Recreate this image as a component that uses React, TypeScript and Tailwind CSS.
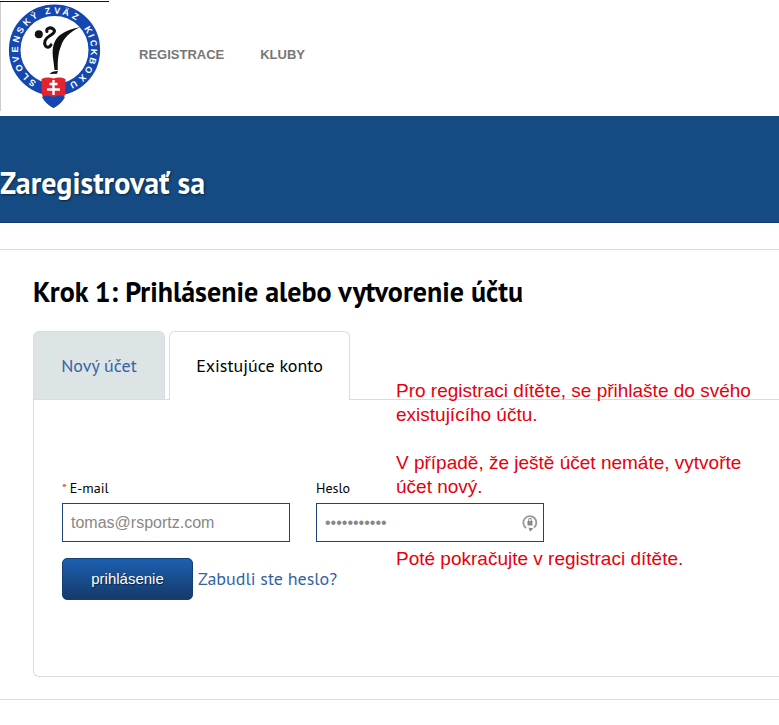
const ringLetters: { char: string; angle: number }[] = [
  { char: "S", angle: 214 },
  { char: "L", angle: 228 },
  { char: "O", angle: 243 },
  { char: "V", angle: 257 },
  { char: "E", angle: 271 },
  { char: "N", angle: 286 },
  { char: "S", angle: 300 },
  { char: "K", angle: 315 },
  { char: "Ý", angle: 329 },
  { char: "Z", angle: 350 },
  { char: "V", angle: 4 },
  { char: "Ä", angle: 17 },
  { char: "Z", angle: 32 },
  { char: "K", angle: 59 },
  { char: "I", angle: 69 },
  { char: "C", angle: 80 },
  { char: "K", angle: 93 },
  { char: "B", angle: 106 },
  { char: "O", angle: 120 },
  { char: "X", angle: 135 },
  { char: "U", angle: 151 },
];

function Logo() {
  return (
    <svg viewBox="0 0 109 111" className="block h-[111px] w-[109px]" role="img" aria-label="Slovenský zväz kickboxu">
      <path d="M0 1.5H109" stroke="#111" strokeWidth="1" />
      <path d="M0.5 2V111" stroke="#ccc" strokeWidth="1" />
      <circle cx="54.5" cy="50" r="39.8" fill="#fff" stroke="#1447b0" strokeWidth="11.6" />
      {ringLetters.map((letter, index) => (
        <text
          key={index}
          x="54.5"
          y="13.5"
          textAnchor="middle"
          transform={`rotate(${letter.angle} 54.5 50)`}
          fill="#fff"
          className="font-['Liberation_Sans',sans-serif] text-[9px] font-bold"
        >
          {letter.char}
        </text>
      ))}
      <circle cx="38.8" cy="34.2" r="4" fill="#111" />
      <path
        d="M47 31.500C45.500 28.500 50 26.800 53 28.800C56.500 31.500 53 34 49.500 36C45 38.500 43.500 43 45.500 46C47.500 48.200 50 47 51 44.800"
        fill="none"
        stroke="#111"
        strokeWidth="3"
        strokeLinecap="round"
      />
      <path d="M80.500 27C72 28.500 62 32 57 38C52.500 44 52 51 53.300 60L54.500 70L57.800 70C57.500 62 58 53 61 46C63.500 38 70 31.500 80.500 27Z" fill="#111" />
      <path d="M49.500 74C51 72 54 71 58 71L57 73.800Z" fill="#111" />
      <path d="M41.500 79Q47 76.500 53.500 78.500Q60 76.500 65.500 79V90C65.500 99 60 104 53.500 108C47 104 41.500 99 41.500 90Z" fill="#e3232f" />
      <path d="M42 97Q47 94 53.500 97Q60 94 65 97Q62 103.500 53.500 108Q45 103.500 42 97Z" fill="#1447b0" />
      <path d="M53.500 80V95M49.500 84H57.500M47 89.500H60" stroke="#fff" strokeWidth="2.4" />
    </svg>
  );
}

function PasswordManagerIcon() {
  return (
    <svg viewBox="0 0 16 18" className="h-[18px] w-4" aria-hidden="true">
      <path d="M4.200 14A6.500 6.500 0 1 1 12 13.600" fill="none" stroke="#999" strokeWidth="1.800" />
      <path d="M6.500 13.500L11.500 14.500L8 17.800Z" fill="#888" />
      <rect x="5.500" y="7" width="5" height="4.500" fill="#888" />
      <path d="M6.600 7V5.800A1.400 1.400 0 0 1 9.400 5.800V7" fill="none" stroke="#888" strokeWidth="1" />
    </svg>
  );
}

const inputClass =
  "block h-[39px] w-full border border-[#1d447c] bg-white px-2 font-['Liberation_Sans',Arial,sans-serif] text-base text-[#888] outline-none";

export default function App() {
  return (
    <div className="overflow-x-hidden bg-white pb-6 font-['PT_Sans','Noto_Sans',sans-serif] text-black">
      <header className="flex h-[116px] items-start">
        <a href="#home">
          <Logo />
        </a>
        <nav className="ml-[30px] mt-[45px] flex gap-9 font-['Liberation_Sans',Arial,sans-serif] text-[13px] font-bold leading-5 text-[#777]">
          <a href="#registrace">REGISTRACE</a>
          <a href="#kluby">KLUBY</a>
        </nav>
      </header>

      <div className="border-b border-[#123a70] bg-[#154a82] pb-5 pt-12">
        <h1 className="text-[30px] font-bold leading-[38px] text-white [text-shadow:1px_1px_2px_rgba(0,0,0,0.5)]">
          Zaregistrovať sa
        </h1>
      </div>

      <main className="mt-[26px] border-y border-[#d9dcdf] pb-[22px] pl-[33px] pt-6">
        <h2 className="text-[28px] font-bold leading-9">Krok 1: Prihlásenie alebo vytvorenie účtu</h2>

        <div className="relative mt-[21px]">
          <div role="tablist" className="relative z-10 -mb-px flex gap-1 text-lg leading-6">
            <button
              type="button"
              role="tab"
              aria-selected="false"
              className="h-[69px] w-[132px] rounded-t-md border border-[#d5dce4] bg-[#dde4e6] text-[#3263a5]"
            >
              Nový účet
            </button>
            <button
              type="button"
              role="tab"
              aria-selected="true"
              className="h-[69px] w-[181px] rounded-t-md border border-b-0 border-[#d5dce4] bg-white"
            >
              Existujúce konto
            </button>
          </div>

          <form className="rounded-bl-md border border-r-0 border-[#d5dce4] px-7 pb-[76px] pt-[78px]" onSubmit={(e) => e.preventDefault()}>
            <div className="flex gap-[26px]">
              <div className="w-[228px]">
                <label htmlFor="email" className="block pb-[5px] text-sm leading-5">
                  <span className="text-[#d9634c]">*</span> E-mail
                </label>
                <input id="email" type="email" defaultValue="tomas@rsportz.com" className={inputClass} />
              </div>
              <div className="w-[228px]">
                <label htmlFor="password" className="block pb-[5px] text-sm leading-5">
                  Heslo
                </label>
                <div className="relative">
                  <input id="password" type="password" defaultValue="heslo123456" className={inputClass} />
                  <span className="absolute inset-y-0 right-1.5 flex items-center">
                    <PasswordManagerIcon />
                  </span>
                </div>
              </div>
            </div>
            <div className="mt-4 flex items-center gap-[5px]">
              <button
                type="submit"
                className="h-[42px] w-[131px] rounded-[5px] border border-[#123f7a] bg-linear-to-b from-[#1c60b0] to-[#143a6c] font-['Liberation_Sans',Arial,sans-serif] text-[15px] text-white [text-shadow:1px_1px_1px_rgba(0,0,0,0.5)]"
              >
                prihlásenie
              </button>
              <a href="#heslo" className="text-lg leading-6 text-[#3263a5]">
                Zabudli ste heslo?
              </a>
            </div>
          </form>

          <div className="absolute left-[363px] top-12 z-20 w-[370px] font-['Liberation_Sans',Arial,sans-serif] text-[19px] leading-6 text-[#e6000c]">
            <p>
              Pro registraci dítěte, se přihlašte do svého
              <br />
              existujícího účtu.
            </p>
            <p className="mt-6">
              V případě, že ještě účet nemáte, vytvořte
              <br />
              účet nový.
            </p>
            <p className="mt-12">Poté pokračujte v registraci dítěte.</p>
          </div>
        </div>
      </main>
    </div>
  );
}
